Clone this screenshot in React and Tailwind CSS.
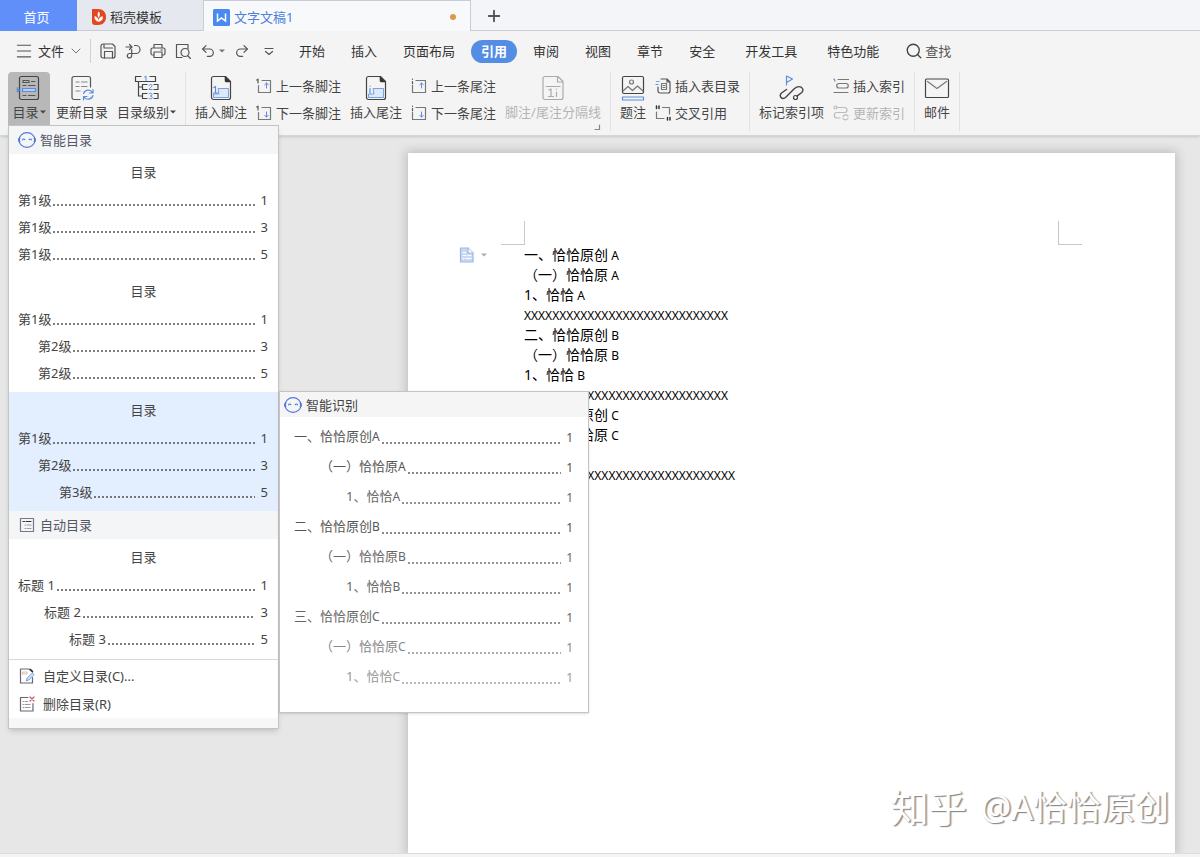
import { ChevronDown, Menu, Plus, Search, Undo2, Redo2 } from 'lucide-react'

const RIBBON_TABS = [
  { label: '开始', cls: 'px-[13px]' },
  { label: '插入', cls: 'px-[13px]' },
  { label: '页面布局', cls: 'px-[13px]' },
  { label: '引用', active: true },
  { label: '审阅', cls: 'px-[13px]' },
  { label: '视图', cls: 'px-[13px]' },
  { label: '章节', cls: 'px-[13px]' },
  { label: '安全', cls: 'px-[13px]' },
  { label: '开发工具', cls: 'px-[17px]' },
  { label: '特色功能', cls: 'px-[13px]' },
]

const SMART_TOCS = [
  { rows: [['第1级', 0, 1], ['第1级', 0, 3], ['第1级', 0, 5]] },
  { rows: [['第1级', 0, 1], ['第2级', 1, 3], ['第2级', 1, 5]] },
  { rows: [['第1级', 0, 1], ['第2级', 1, 3], ['第3级', 2, 5]], active: true },
]
const AUTO_ROWS = [['标题 1', 0, 1], ['标题 2', 1, 3], ['标题 3', 2, 5]]

const SMART_INDENT = ['pl-[9px]', 'pl-[29px]', 'pl-[50px]']
const AUTO_INDENT = ['pl-[9px]', 'pl-[35px]', 'pl-[60px]']
const PREVIEW_INDENT = ['pl-[14px]', 'pl-[40px]', 'pl-[66px]']

const PREVIEW_ROWS = [
  { text: '一、恰恰原创', mark: 'A', level: 0, color: 'text-[#555]' },
  { text: '（一）恰恰原', mark: 'A', level: 1, color: 'text-[#555]' },
  { text: '1、恰恰', mark: 'A', level: 2, color: 'text-[#666]' },
  { text: '二、恰恰原创', mark: 'B', level: 0, color: 'text-[#555]' },
  { text: '（一）恰恰原', mark: 'B', level: 1, color: 'text-[#666]' },
  { text: '1、恰恰', mark: 'B', level: 2, color: 'text-[#666]' },
  { text: '三、恰恰原创', mark: 'C', level: 0, color: 'text-[#666]' },
  { text: '（一）恰恰原', mark: 'C', level: 1, color: 'text-[#888]' },
  { text: '1、恰恰', mark: 'C', level: 2, color: 'text-[#999]' },
]

const DOC_LINES = [
  { text: '一、恰恰原创', mark: 'A' },
  { text: '（一）恰恰原', mark: 'A' },
  { text: '1、恰恰', mark: 'A' },
  { fill: 29 },
  { text: '二、恰恰原创', mark: 'B' },
  { text: '（一）恰恰原', mark: 'B' },
  { text: '1、恰恰', mark: 'B' },
  { fill: 29 },
  { text: '三、恰恰原创', mark: 'C' },
  { text: '（一）恰恰原', mark: 'C' },
  { text: '1、恰恰', mark: 'C' },
  { fill: 30 },
]

/* ── Icons ───────────────────────────────────────────────── */

function Icon({ size = 16, children, className = '' }) {
  return (
    <svg
      width={size}
      height={size}
      viewBox={`0 0 ${size} ${size}`}
      fill="none"
      stroke="#555"
      strokeWidth="1.2"
      strokeLinecap="round"
      strokeLinejoin="round"
      className={`shrink-0 ${className}`}
      aria-hidden="true"
    >
      {children}
    </svg>
  )
}

const BLUE = '#5b8dde'

const DocerIcon = () => (
  <svg width="16" height="18" viewBox="0 0 16 18" className="shrink-0" aria-hidden="true">
    <path d="M1 1h6c5 0 8 3.400 8 8s-3 8-8 8H4c-2 0-3-1-3-3z" fill="#e2481f" />
    <path d="M7.500 13.500C4.500 13 3.500 11 3.800 8.500c2 .3 3.400 1.700 3.700 5zM7.500 13.500c3.500-.5 4.500-2.500 4-5-2 .3-3.600 1.700-4 5z" fill="#fff" stroke="#fff" strokeWidth=".5" />
    <path d="M7.700 3.500c1.600 1.600 1.600 3.800 0 6.500-1.500-2.700-1.500-4.900 0-6.500z" fill="#fff" />
  </svg>
)

const WriterIcon = () => (
  <svg width="17" height="17" viewBox="0 0 17 17" className="shrink-0" aria-hidden="true">
    <rect width="17" height="17" rx="1.500" fill="#4a8af0" />
    <path d="M4.500 4.500V12l4-3 4 3V4.500" fill="none" stroke="#fff" strokeWidth="1.500" />
  </svg>
)

const SaveIcon = () => (
  <Icon>
    <path d="M3 1h9.500L15 3.500V13a2 2 0 0 1-2 2H3a2 2 0 0 1-2-2V3a2 2 0 0 1 2-2z" />
    <path d="M4 1.500V5h8.500M4.500 15V8.500h8V15" />
  </Icon>
)
const ExportIcon = () => (
  <Icon>
    <path d="M1 4h5.500M4.500 1.500L7 4 4.500 6.500M9.500 2.500h1.500a4 4 0 0 1 0 8H4.500a2.200 2.200 0 1 0 2.200 2.200V6.500" />
  </Icon>
)
const PrintIcon = () => (
  <Icon>
    <path d="M4 5V1.500h8V5M4 12H2.500A1.500 1.500 0 0 1 1 10.500v-4A1.500 1.500 0 0 1 2.500 5h11A1.500 1.500 0 0 1 15 6.500v4a1.500 1.500 0 0 1-1.500 1.500H12M4 9h8v5.500H4zM11 7h1.500" />
  </Icon>
)
const PreviewIcon = () => (
  <Icon>
    <path d="M7 14.500H1.500v-13h11.500V6M13 13l2.500 2.500" />
    <circle cx="10" cy="9.500" r="4" />
  </Icon>
)

const TocIcon = () => (
  <Icon size={26}>
    <rect x="3.500" y="1.500" width="19" height="23" rx="2" stroke="#444" />
    <path d="M7 5.500h6v2H7zM15.500 6.500H19M7 20.500h3M12.500 20.500H19M7 10.500h3M12.500 10.500H19" stroke="#555" />
    <path d="M6.500 13.500h13v3h-13z" fill="#b9d0f5" stroke={BLUE} />
    <path d="M1 12.500v5l3-2.500z" fill={BLUE} stroke={BLUE} strokeWidth=".5" />
  </Icon>
)
const RefreshTocIcon = () => (
  <Icon size={26}>
    <path d="M11 24.500H5a2 2 0 0 1-2-2v-19a2 2 0 0 1 2-2h14.500a2 2 0 0 1 2 2V12" />
    <path d="M7 7h3M12.500 7H18M7 11.500h3M12.500 11.500H18M7 16h4" stroke="#888" />
    <path d="M14.500 18.500a5 5 0 0 1 9-1M24 14.500v3.500h-3.500M24 20.500a5 5 0 0 1-9 1.500M14.500 25v-3.500H18" stroke={BLUE} />
  </Icon>
)
const LevelIcon = () => (
  <Icon size={26}>
    <path d="M7 1.500H1.500v5H7M16 1.500h5.500v5H16M13 9.500H8.500v5H13M20 9.500h4v5H20M13 18.500H8.500v5H13M20 18.500h4v5H20M4.500 6.500V21h4M4.500 12h4M7 6.500h9" stroke="#444" />
    <path d="M10.500 2l1.500-1v5M15 10.500c.5-1.500 3-1.500 3 .2 0 1.300-3 2.300-3 3.800h3.200M15 18.800c1-1.300 3-.8 3 .8s-1.700 1.400-1.700 1.400 1.900-.1 1.900 1.500-2.300 2-3.300.8" stroke={BLUE} strokeWidth="1" />
  </Icon>
)

// page with a folded corner, shared by footnote and endnote buttons
function NoteIcon({ endnote }) {
  return (
    <Icon size={26}>
      <path d="M5.500 1.500h12l5 5v16a2 2 0 0 1-2 2h-15a2 2 0 0 1-2-2v-19a2 2 0 0 1 2-2z" stroke="#444" />
      <path d="M17 1.500l5.500 5.500H18a1 1 0 0 1-1-1z" fill="#333" stroke="#333" strokeWidth=".5" />
      <path d="M10.500 13.500h10v9H5.500v-3.500h5z" fill="#dce8fb" stroke={BLUE} strokeWidth=".8" />
      {endnote ? (
        <path d="M7 13.500V18M7 11v.2" stroke={BLUE} />
      ) : (
        <path d="M5.800 12.500L7.500 11.500V18M5.500 18h4" stroke={BLUE} />
      )}
    </Icon>
  )
}

function JumpIcon({ down, endnote }) {
  return (
    <Icon>
      <path d={endnote ? 'M1.500 7v7.500h13v-12H5' : 'M2.500 7.500v7h12v-12H6'} stroke="#777" />
      <path d={endnote ? 'M1.500 1v.3M1.500 3.500v2' : 'M.8 2L2 1.200V5'} stroke="#555" />
      <path d={down ? 'M10.500 7v5M8.700 10.300l1.800 1.800 1.800-1.800' : 'M10.500 10V5M8.700 6.800L10.500 5l1.800 1.800'} stroke={BLUE} strokeWidth="1" />
    </Icon>
  )
}

const SeparatorIcon = () => (
  <Icon size={26}>
    <path d="M5 1.500h13l5 5v16a2 2 0 0 1-2 2H5a2 2 0 0 1-2-2v-19a2 2 0 0 1 2-2zM17.500 1.500V7H23M6 11.500h14" stroke="#aaa" />
    <path d="M9 15l2-1v7.500M8.500 21.500h5M16.500 17v4.500M16.500 14v.3" stroke="#aaa" />
  </Icon>
)
const CaptionIcon = () => (
  <Icon size={26}>
    <rect x="2.500" y="1.500" width="21" height="17" rx="1.500" stroke="#444" />
    <circle cx="11.500" cy="7" r="2" stroke="#777" />
    <path d="M3 16l5-4.500 4.500 4 5-4.500 5.500 5" stroke="#777" />
    <rect x="2.500" y="22" width="21" height="3" stroke={BLUE} />
  </Icon>
)
const FigureTocIcon = () => (
  <Icon>
    <path d="M6 1h6l3 3v9a2 2 0 0 1-2 2H5a2 2 0 0 1-2-2V9M12 1v3h3" />
    <path d="M6.500 5.500h5v6h-5zM8 7.500h2M8 9.500h2" stroke="#777" />
    <path d="M1 6.500h2M3 3.500h1M1.500 3.500h.2" stroke={BLUE} />
  </Icon>
)
const CrossRefIcon = () => (
  <Icon>
    <path d="M1.500 1v2.500M4 1v2.500M12.500 12.500V15M15 12.500V15" stroke="#333" strokeWidth="1.500" />
    <path d="M1.500 7v6.500H9M7.500 2.500h7V9" stroke="#777" />
  </Icon>
)
const MarkIndexIcon = () => (
  <Icon size={26}>
    <path d="M8.500 10V1l6 3-6 3.500" stroke={BLUE} />
    <path d="M8.500 14.500l-5 3.500c-3 3 .5 7.500 4 4.500l9-9c3-2.500 6.500-2.500 8 0 1.500 3-1 4.500-5.500 7.500" stroke="#444" strokeWidth="1.400" />
    <circle cx="17.500" cy="22.500" r="2" stroke="#444" />
  </Icon>
)
const InsertIndexIcon = () => (
  <Icon>
    <path d="M5 1.500h10.500M6 5.500h7M5 10h8M1 14.500h14M6 5.500a2.200 2.200 0 0 0 0 4.500M13 5.500a2.200 2.200 0 0 1 0 4.500" stroke="#777" />
    <path d="M1 1l1 2" stroke={BLUE} />
  </Icon>
)
const UpdateIndexIcon = () => (
  <Icon>
    <path d="M4 2.500h7.500a2.500 2.500 0 0 1 0 5H4a2.700 2.700 0 0 0 0 5.500h3M10 11.500a3 3 0 0 1 5-.5M15 13.500a3 3 0 0 1-5 0" stroke="#bbb" />
    <circle cx="2.500" cy="2.500" r="1.500" stroke="#bbb" />
  </Icon>
)
const MailIcon = () => (
  <Icon size={26}>
    <rect x="1.500" y="4" width="23" height="18.500" rx="1" stroke="#444" />
    <path d="M3.500 6.500l9.500 7 9.500-7" stroke="#777" />
  </Icon>
)

const SmartIcon = () => (
  <Icon size={18}>
    <ellipse cx="9" cy="9" rx="8" ry="7.300" stroke="#5577dd" />
    <path d="M1.500 10.500C.7 9.500.7 8 1.500 7.500M16.500 10.500c.8-1 .8-2.500 0-3" stroke="#5577dd" strokeWidth="1.800" />
    <path d="M4.500 8.800c.7-1 1.700-1 2.300-.2M11.200 8.600c.6-.8 1.600-.8 2.300.2" stroke="#5577dd" />
  </Icon>
)
const AutoIcon = () => (
  <Icon>
    <rect x="1.500" y="1.500" width="13" height="13" stroke="#778" />
    <path d="M4 4.500h1.500M7 4.500h5" stroke="#333" />
    <path d="M6 8h1M8.500 8H12M6 11.500h1M8.500 11.500H12" stroke="#99a" />
  </Icon>
)
const CustomTocIcon = () => (
  <Icon>
    <path d="M13.500 9.500v5.500h-12V1H10l3.500 3" stroke="#667" />
    <path d="M11.500 1.500l2 2" stroke="#333" strokeWidth="1.600" />
    <path d="M4 4h4v2H4z" stroke="#d8a890" strokeWidth=".8" />
    <path d="M7.500 12.500l.7-2.500 5.300-5 1.500 1.500-5 5.200z" fill="#dce8fb" stroke={BLUE} strokeWidth=".9" />
  </Icon>
)
const RemoveTocIcon = () => (
  <Icon>
    <path d="M9 1.500H1.500V15h12.500V7.500" stroke="#667" />
    <path d="M4 5.500h1M6.500 5.500h2M4 8.500h1M6.500 8.500H11M4 11.500h1M6.500 11.500H11" stroke="#999" />
    <path d="M11 1l4 4M15 1l-4 4" stroke="#d8506a" />
  </Icon>
)
const OutlineIcon = () => (
  <Icon>
    <path d="M1.500 1H9l5 5v9H1.500z" fill="#c9d9f2" stroke="#9db7e3" />
    <path d="M9 1v5h5" fill="#fff" stroke="#9db7e3" />
    <path d="M4 5.500h2.500M4 8.500h3M9 8.500h3M4 11.500h1M7 11.500h5" stroke="#fff" />
  </Icon>
)

function Caret({ className = '' }) {
  return (
    <svg width="6" height="4" viewBox="0 0 6 4" className={`shrink-0 ${className}`} aria-hidden="true">
      <path d="M0 .5h6L3 3.500z" fill="currentColor" />
    </svg>
  )
}

/* ── Ribbon pieces ───────────────────────────────────────── */

function BigButton({ icon, label, caret, disabled }) {
  return (
    <button
      type="button"
      disabled={disabled}
      className={`flex flex-col items-center pt-[3px] ${disabled ? 'text-[#b4b4b4]' : 'text-[#444]'}`}
    >
      {icon}
      <span className="mt-[2px] flex items-center gap-px leading-[18px]">
        {label}
        {caret && <Caret />}
      </span>
    </button>
  )
}

function SmallButton({ icon, label, disabled }) {
  return (
    <button
      type="button"
      disabled={disabled}
      className={`flex h-[27px] items-center gap-1 ${disabled ? 'text-[#b4b4b4]' : 'text-[#444]'}`}
    >
      {icon}
      {label}
    </button>
  )
}

function Divider() {
  return <div className="mb-1 w-px shrink-0 self-stretch bg-[#e2e2e2]" />
}

/* ── Contents dropdown ───────────────────────────────────── */

function Leader({ className = '' }) {
  return (
    <span
      className={`h-[2px] flex-1 bg-[repeating-linear-gradient(90deg,currentColor_0_2px,transparent_2px_4px)] opacity-70 ${className}`}
    />
  )
}

function TocBlock({ rows, indent, active }) {
  return (
    <button
      type="button"
      role="menuitem"
      className={`block w-full py-[5px] pr-[10px] text-left text-[#444] ${active ? 'bg-[#e3eefe]' : ''}`}
    >
      <span className="block h-7 pl-[10px] text-center leading-[26px]">目录</span>
      {rows.map(([label, level, page], i) => (
        <span key={i} className={`flex h-[27px] items-center leading-[27px] ${indent[level]}`}>
          {label}
          <Leader className="ml-[2px] mt-[9px]" />
          <span className="ml-[6px]">{page}</span>
        </span>
      ))}
    </button>
  )
}

function MenuHeading({ icon, label }) {
  return (
    <div className="flex h-7 items-center gap-1 bg-[#f3f5f7] pl-[9px] text-[#556]">
      <span className="flex w-[18px] justify-center">{icon}</span>
      {label}
    </div>
  )
}

function PreviewPanel() {
  return (
    <div className="absolute -top-px left-full ml-px w-[310px] border border-[#c4c4c4] bg-white pb-[21px] shadow-sm">
      <div className="flex h-[25px] items-center gap-1 bg-[#f5f5f5] pl-1 text-[#444]">
        <SmartIcon />
        智能识别
      </div>
      <ul className="pt-1">
        {PREVIEW_ROWS.map((row, i) => (
          <li
            key={i}
            className={`flex h-[30px] items-center pr-[15px] leading-[30px] ${PREVIEW_INDENT[row.level]} ${row.color}`}
          >
            {row.text}
            <span className="pt-[2px] text-[12px]">{row.mark}</span>
            <Leader className="ml-[2px] mt-[14px]" />
            <span className="ml-[5px] pt-1 text-[12px]">1</span>
          </li>
        ))}
      </ul>
    </div>
  )
}

function TocMenu() {
  return (
    <div
      role="menu"
      className="absolute left-0 top-full z-20 w-[271px] border border-[#c4c4c4] bg-white shadow-md"
    >
      <MenuHeading icon={<SmartIcon />} label="智能目录" />
      {SMART_TOCS.map((toc, i) => (
        <div key={i} className="relative">
          <TocBlock rows={toc.rows} indent={SMART_INDENT} active={toc.active} />
          {toc.active && <PreviewPanel />}
        </div>
      ))}
      <MenuHeading icon={<AutoIcon />} label="自动目录" />
      <TocBlock rows={AUTO_ROWS} indent={AUTO_INDENT} />
      <div className="mt-px border-t border-[#d8d8d8] pt-[2px]">
        <button type="button" role="menuitem" className="flex h-7 w-full items-center gap-2 pl-[10px] text-[#444]">
          <CustomTocIcon />
          自定义目录(C)...
        </button>
        <button type="button" role="menuitem" className="flex h-7 w-full items-center gap-2 pl-[10px] text-[#444]">
          <RemoveTocIcon />
          删除目录(R)
        </button>
      </div>
      <div className="h-[10px] bg-[#f7f7f7]" />
    </div>
  )
}

/* ── Page ────────────────────────────────────────────────── */

function TitleTabs() {
  return (
    <div className="flex h-[31px] bg-[#f3f5f9]">
      <button type="button" className="w-[77px] bg-[#608ffa] pr-1 pt-[2px] text-white">首页</button>
      <button
        type="button"
        className="flex w-[126px] items-center gap-[3px] border-b border-[#c9ccd6] bg-[#e6e8ef] pl-[14px] pt-1 text-[#333]"
      >
        <DocerIcon />
        稻壳模板
      </button>
      <button
        type="button"
        className="flex w-[268px] items-center gap-1 border-x border-t border-[#c9ccd6] bg-[#f7f9fb] pl-[9px] pr-[14px] pt-[2px] text-[#4f7fdc]"
      >
        <WriterIcon />
        文字文稿1
        <span className="ml-auto h-[6px] w-[6px] rounded-full bg-[#e0974a]" />
      </button>
      <div className="flex flex-1 items-center border-b border-[#c9ccd6] pl-[14px] pt-[2px]">
        <button type="button" aria-label="新建">
          <Plus size={18} strokeWidth={2.5} color="#555" />
        </button>
      </div>
    </div>
  )
}

function MenuBar() {
  return (
    <div className="flex h-10 items-center text-[#333]">
      <button type="button" className="flex items-center gap-1 pl-[14px]">
        <Menu size={20} strokeWidth={1.3} color="#555" />
        文件
        <ChevronDown size={16} strokeWidth={1.2} color="#555" />
      </button>
      <div className="ml-[6px] h-6 w-px bg-[#d0d0d0]" />
      <div className="flex w-[195px] items-center gap-[9px] pl-[9px]">
        <button type="button" aria-label="保存"><SaveIcon /></button>
        <button type="button" aria-label="输出"><ExportIcon /></button>
        <button type="button" aria-label="打印"><PrintIcon /></button>
        <button type="button" aria-label="打印预览"><PreviewIcon /></button>
        <button type="button" aria-label="撤销" className="flex items-center gap-[3px]">
          <Undo2 size={16} strokeWidth={1.8} color="#555" />
          <Caret className="text-[#777]" />
        </button>
        <button type="button" aria-label="恢复"><Redo2 size={16} strokeWidth={1.8} color="#555" /></button>
        <button type="button" aria-label="更多" className="pl-1">
          <Icon size={12}><path d="M2 3.500h8M2.500 6.500L6 9.500l3.500-3" /></Icon>
        </button>
      </div>
      <nav className="flex items-center">
        {RIBBON_TABS.map(tab => (
          <button
            key={tab.label}
            type="button"
            className={
              tab.active
                ? 'mx-[3px] h-[23px] rounded-full bg-[#558de4] px-[10px] font-bold text-white'
                : tab.cls
            }
          >
            {tab.label}
          </button>
        ))}
      </nav>
      <button type="button" className="flex items-center gap-[2px] pl-[13px] text-[#555]">
        <Search size={18} strokeWidth={1.8} color="#444" />
        查找
      </button>
    </div>
  )
}

function Ribbon() {
  return (
    <div className="flex h-[64px] gap-[9px] pl-2 pt-px">
      <div className="flex items-start gap-[9px]">
        <div className="relative -mr-[3px]">
          <button
            type="button"
            aria-expanded="true"
            className="flex h-[53px] w-[42px] flex-col items-center rounded-t bg-[#b8b8b8] pt-[3px] text-[#444]"
          >
            <TocIcon />
            <span className="mt-[2px] flex items-center gap-px leading-[18px]">
              目录
              <Caret />
            </span>
          </button>
          <TocMenu />
        </div>
        <BigButton icon={<RefreshTocIcon />} label="更新目录" />
        <BigButton icon={<LevelIcon />} label="目录级别" caret />
      </div>
      <Divider />
      <div className="flex items-start gap-[9px]">
        <BigButton icon={<NoteIcon />} label="插入脚注" />
        <div>
          <SmallButton icon={<JumpIcon />} label="上一条脚注" />
          <SmallButton icon={<JumpIcon down />} label="下一条脚注" />
        </div>
        <BigButton icon={<NoteIcon endnote />} label="插入尾注" />
        <div>
          <SmallButton icon={<JumpIcon endnote />} label="上一条尾注" />
          <SmallButton icon={<JumpIcon endnote down />} label="下一条尾注" />
        </div>
        <div className="flex flex-col items-end">
          <BigButton icon={<SeparatorIcon />} label="脚注/尾注分隔线" disabled />
          <Icon size={8} className="mt-[2px]"><path d="M6.500 2v4.500H2" stroke="#888" /></Icon>
        </div>
      </div>
      <Divider />
      <div className="flex items-start gap-[9px]">
        <BigButton icon={<CaptionIcon />} label="题注" />
        <div>
          <SmallButton icon={<FigureTocIcon />} label="插入表目录" />
          <SmallButton icon={<CrossRefIcon />} label="交叉引用" />
        </div>
      </div>
      <Divider />
      <div className="flex items-start gap-[9px]">
        <BigButton icon={<MarkIndexIcon />} label="标记索引项" />
        <div>
          <SmallButton icon={<InsertIndexIcon />} label="插入索引" />
          <SmallButton icon={<UpdateIndexIcon />} label="更新索引" disabled />
        </div>
      </div>
      <Divider />
      <BigButton icon={<MailIcon />} label="邮件" />
      <Divider />
    </div>
  )
}

function DocumentPage() {
  return (
    <article className="relative flex-1 bg-white text-[14px] text-black shadow-[0_0_10px_2px_rgba(0,0,0,0.18)]">
      <div className="flex justify-between px-[93px] pt-[68px]">
        <div className="h-6 w-6 border-b border-r border-[#c8c8c8]" />
        <div className="h-6 w-6 border-b border-l border-[#c8c8c8]" />
      </div>
      <div className="flex">
        <div className="flex h-5 w-[116px] shrink-0 items-center gap-[6px] pl-[51px]">
          <OutlineIcon />
          <Caret className="text-[#aab]" />
        </div>
        <div>
          {DOC_LINES.map((line, i) => (
            <p key={i} className="h-5 whitespace-nowrap leading-5">
              {line.fill ? (
                <span className="text-[12px]">{'X'.repeat(line.fill)}</span>
              ) : (
                <>
                  {line.text}
                  <span className="text-[12px]"> {line.mark}</span>
                </>
              )}
            </p>
          ))}
        </div>
      </div>
      <div className="absolute bottom-6 right-[6px] flex items-center gap-[14px] whitespace-nowrap text-[34px] leading-[44px] text-white [text-shadow:1px_1px_1px_#888,2px_1px_1px_#bbb]">
        <span className="text-[38px]">知乎</span>
        <span>@A恰恰原创</span>
      </div>
    </article>
  )
}

export default function App() {
  return (
    <div className="flex min-h-screen flex-col overflow-x-hidden bg-[#e7e7e7] font-['Noto_Sans','Noto_Sans_CJK_SC',sans-serif] text-[13px] leading-5">
      <header className="relative z-10 whitespace-nowrap border-b border-[#d6d6d6] bg-[#f4f4f4] shadow-sm">
        <TitleTabs />
        <MenuBar />
        <Ribbon />
      </header>
      <main className="flex flex-1 flex-col overflow-hidden pl-[34%] pr-[25px] pt-[17px]">
        <DocumentPage />
      </main>
      <footer className="h-1 border-t border-[#dcdcdc] bg-[#f4f4f4]" />
    </div>
  )
}
